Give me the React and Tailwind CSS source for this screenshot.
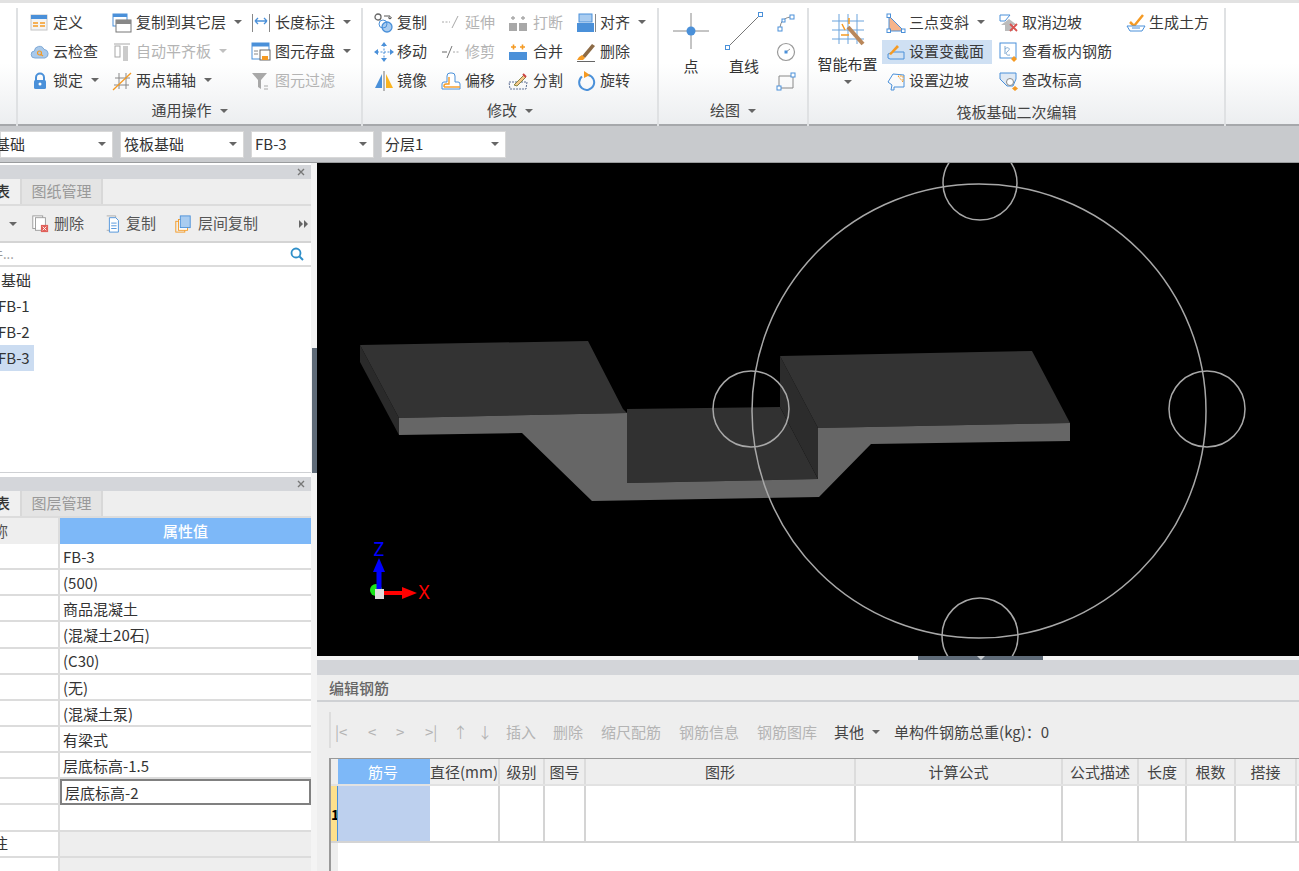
// Ribbon + component panels + 3D canvas of a rebar modelling desktop app

const BLUE = "#4a90d9";
const LIGHT = "#a9ccf0";
const ORANGE = "#f59a23";
const GRAY = "#a8a8a8";

const ICONS = {
  define: <><rect x="1" y="2" width="16" height="15" fill="#f4f4f4" stroke="#c4c4c4" /><rect x="1" y="2" width="16" height="4" fill={BLUE} /><path d="M3 10h5M3 13h5M10 10h5M10 13h5" stroke={ORANGE} strokeWidth="1.400" /></>,
  cloud: <><path d="M5 16a3.500 3.500 0 0 1-.6-7A5 5 0 0 1 14 7.400 4.400 4.400 0 0 1 15 16z" fill="#a9c9ea" stroke="#7fa9d6" /><circle cx="9.500" cy="11" r="2" fill="none" stroke={ORANGE} strokeWidth="1.200" /><path d="M11 12.500l2 1.500" stroke={ORANGE} strokeWidth="1.200" /></>,
  lock: <><path d="M6 10V6.500a4 4 0 0 1 8 0V10" fill="none" stroke={BLUE} strokeWidth="2" /><rect x="4" y="9" width="12" height="9" rx="1.500" fill={BLUE} /><circle cx="10" cy="13" r="1.500" fill="#fff" /></>,
  copyLayer: <><rect x="1" y="1" width="14" height="12" fill="#fff" stroke={BLUE} /><rect x="1" y="1" width="14" height="3" fill={BLUE} /><rect x="4" y="7" width="15" height="12" fill="#fff" stroke="#777" /><rect x="4" y="7" width="15" height="4" fill="#888" /></>,
  autoAlign: <><path d="M2 2h16" stroke={GRAY} /><rect x="3" y="4" width="5" height="11" fill="none" stroke={GRAY} /><rect x="11" y="4" width="5" height="15" fill={GRAY} opacity=".6" /></>,
  twoPoint: <><path d="M3 7h15M2 14h15M7 2v16M14 2v16" stroke="#888" /><path d="M1 19L19 2" stroke={ORANGE} strokeWidth="1.300" /></>,
  dim: <><path d="M1.500 1v18M18.500 1v18" stroke="#888" /><path d="M4 8h12M4 8l3-3M4 8l3 3M16 8l-3-3M16 8l-3 3" fill="none" stroke={BLUE} strokeWidth="1.300" /></>,
  saveEl: <><rect x="1" y="1" width="17" height="16" fill="#fff" stroke={BLUE} /><rect x="1" y="1" width="17" height="3.500" fill={BLUE} /><path d="M3 9h4M3 12h4" stroke="#888" /><rect x="9" y="8" width="10" height="10" fill="#fff" stroke="#666" /><rect x="11" y="14" width="6" height="4" fill={ORANGE} /></>,
  filter: <><path d="M1 2h15l-6 7v9l-3-2V9z" fill={GRAY} /><path d="M13 15h4M13 18h4" stroke={GRAY} /></>,
  copy: <><circle cx="4" cy="4" r="3" fill="none" stroke="#666" strokeWidth="1.300" /><circle cx="13" cy="14" r="5" fill={LIGHT} stroke={BLUE} strokeWidth="1.300" /><circle cx="9" cy="11" r="4" fill="none" stroke={BLUE} /><path d="M10 3h6v3M16 6l-2-1.500M16 6l1.800-1.500" fill="none" stroke="#555" /></>,
  move: <><path d="M10 3v14M3 10h14" stroke={BLUE} strokeWidth="1" strokeDasharray="2 1.500" /><path d="M10 0l3 4H7zM10 20l3-4H7zM0 10l4-3v6zM20 10l-4-3v6z" fill={BLUE} /></>,
  mirror: <><path d="M8 3v14H1z" fill={BLUE} /><path d="M12 3v14h7z" fill="#fbb41f" /><path d="M10 0v20" stroke="#777" /></>,
  extend: <><path d="M1 9h8" stroke={GRAY} strokeDasharray="2 1.500" /><path d="M11 15l6-12" stroke={GRAY} /></>,
  trim: <><path d="M1 10h5" stroke="#666" /><path d="M12 10h7" stroke={GRAY} strokeDasharray="2 1.500" /><path d="M6 16l5-12" stroke="#777" /></>,
  offset: <><path d="M1 18v-5a2 2 0 0 1 2-2h3V5a3 3 0 0 1 3-3h2a3 3 0 0 1 3 3v6h3a2 2 0 0 1 2 2v5z" fill="#fff" stroke={BLUE} /><path d="M3 16v-1a2 2 0 0 1 2-2h3V6" fill="none" stroke={ORANGE} strokeWidth="1.400" /><path d="M3 16h16" stroke={ORANGE} strokeWidth="1.400" /></>,
  breakEl: <><rect x="1" y="10" width="8" height="8" fill={GRAY} /><rect x="11" y="10" width="8" height="8" fill={GRAY} /><path d="M3 5h4M5 3v4M13 5h4M15 3v4" stroke={GRAY} strokeWidth="1.300" /></>,
  merge: <><rect x="1" y="10" width="18" height="8" fill={BLUE} /><path d="M3 5h5M5.500 2.500v5M12 5h5M14.500 2.500v5" stroke={ORANGE} strokeWidth="1.600" /></>,
  split: <><path d="M1 11h18l-1 7H2z" fill="none" stroke="#5d6f94" strokeDasharray="2 1" /><path d="M6 14L16 4l2 2L9 15z" fill="#f6c78b" stroke="#884" /><path d="M15 3l3 3" stroke="#c44" strokeWidth="2" /></>,
  align: <><rect x="3" y="1" width="13" height="8" fill={LIGHT} stroke={BLUE} /><rect x="1" y="10" width="17" height="9" fill={BLUE} /><path d="M19.500 1v18" stroke="#888" /></>,
  erase: <><path d="M6 14L16 2l3 2L9 16z" fill="#8c6a45" /><path d="M3 15l3-2 3 3-2 2H1z" fill={ORANGE} /><path d="M1 19.500h18" stroke="#666" /></>,
  rotate: <><path d="M6 5.500a7.500 7.500 0 1 0 6-1.500" fill="none" stroke={BLUE} strokeWidth="2" /><path d="M8 0l6 4-6 3z" fill={ORANGE} /></>,
  arc: <><path d="M4 16C4 8 9 4 16 4" fill="none" stroke="#888" /><rect x="2" y="14" width="4" height="4" fill="#fff" stroke={BLUE} /><rect x="14" y="2" width="4" height="4" fill="#fff" stroke={BLUE} /><rect x="6" y="6" width="3" height="3" fill="#fff" stroke={BLUE} /></>,
  circle: <><circle cx="10" cy="10" r="8.500" fill="none" stroke="#999" strokeWidth="1.200" /><path d="M10 10l4-3" stroke="#999" /><rect x="8.500" y="8.500" width="3" height="3" fill={BLUE} /></>,
  rect: <><path d="M3 5h14v12H3z" fill="none" stroke="#888" /><rect x="1" y="15" width="4" height="4" fill="#fff" stroke={BLUE} /><rect x="15" y="2" width="4" height="4" fill="#fff" stroke={BLUE} /></>,
  threePt: <><path d="M3 3v15h15z" fill="#f6b48a" stroke={BLUE} /><rect x="1" y="1" width="3.500" height="3.500" fill="#fff" stroke={BLUE} /><rect x="1" y="16" width="3.500" height="3.500" fill="#fff" stroke={BLUE} /><rect x="15.500" y="16" width="3.500" height="3.500" fill="#fff" stroke={BLUE} /></>,
  section: <><path d="M2 12l5-2h11v7H4l-2-1z" fill="none" stroke={BLUE} /><path d="M3 12l8-9 2 2-8 8z" fill={ORANGE} /></>,
  slope: <><path d="M2 11l5-8 11 1v12H8v3H5l1-5z" fill="none" stroke={BLUE} /><path d="M12 5l5 6V5z" fill="none" stroke={ORANGE} strokeDasharray="2 1" /></>,
  cancel: <><path d="M1 2v6h5l5-6z" fill="none" stroke={BLUE} /><path d="M2 12l8-6 8 6h-4v6H6v-6z" fill="#bbb" /><path d="M11 11l7 7M18 11l-7 7" stroke="#d9534f" strokeWidth="1.800" /></>,
  viewBar: <><rect x="1" y="1" width="16" height="15" fill="#fff" stroke={BLUE} /><path d="M6 4v8M6 7c3-3 6 0 3 2s-2 5 2 4" fill="none" stroke="#7da7d0" /><path d="M15 14l3 3-3 3-3-3z" fill={ORANGE} /></>,
  elev: <><path d="M1 2h16v6l-3 7H8L1 8z" fill="#dfe9f4" stroke={BLUE} /><circle cx="11" cy="11" r="3.500" fill="#fff" stroke="#888" /><path d="M16 15l3 2.500-3 2.500-3-2.500z" fill={ORANGE} /></>,
  earth: <><path d="M4 9l4 4 9-11" fill="none" stroke={ORANGE} strokeWidth="2.500" /><path d="M1 13h18l-3 5H4z" fill="#fff" stroke={BLUE} /><path d="M6 15h8" stroke={BLUE} /></>,
  del: <><rect x="2" y="1" width="11" height="14" fill="#fff" stroke="#999" /><rect x="5" y="3" width="11" height="14" fill="#fff" stroke="#999" /><rect x="11" y="11" width="8" height="8" fill="#e0605a" /><path d="M13 13l4 4M17 13l-4 4" stroke="#fff" /></>,
  doc: <><path d="M3 1h10v16H3" fill="none" stroke="#aaa" /><path d="M6 3h7l3 3v13H6z" fill="#fff" stroke={BLUE} /><path d="M8 9h6M8 12h6M8 15h6" stroke={BLUE} /></>,
  layerCopy: <><rect x="2" y="7" width="10" height="12" fill="none" stroke={ORANGE} /><rect x="5" y="5" width="10" height="12" fill="#fff" stroke={ORANGE} /><rect x="7" y="1" width="11" height="13" fill={LIGHT} stroke={BLUE} /></>,
};

function Icon({ name, size = 20 }) {
  return (
    <svg width={size} height={size} viewBox="0 0 20 20" className="shrink-0 block">
      {ICONS[name]}
    </svg>
  );
}

function Caret({ color = "border-t-[#666]" }) {
  return <span className={`inline-block w-0 h-0 border-x-[4px] border-t-[4px] border-x-transparent ${color}`} />;
}

function Item({ icon, label, off, caret, active, w = "w-[23px]" }) {
  return (
    <div className="h-[29px] flex items-center">
      <div className={`h-6 flex items-center whitespace-nowrap ${active ? "bg-[#cfe0f3] -ml-1 pl-1 w-[110px]" : ""}`}>
        <span className={`${w} shrink-0`}>
          <Icon name={icon} />
        </span>
        <span className={off ? "text-[#b4b4b4]" : "text-[#3a3a3a]"}>{label}</span>
        {caret && (
          <span className="ml-[8px] mb-[2px] flex">
            <Caret color={off ? "border-t-[#c0c0c0]" : "border-t-[#666]"} />
          </span>
        )}
      </div>
    </div>
  );
}

function Column({ width, items }) {
  return (
    <div className={`${width} shrink-0`}>
      {items.map((it) => (
        <Item key={it.label} {...it} />
      ))}
    </div>
  );
}

function Group({ width, title, caret = true, children, pad = "", titlePad = "" }) {
  return (
    <div className={`${width} shrink-0 flex flex-col border-r-2 border-[#dfe1e3] h-[118px]`}>
      <div className={`flex h-[87px] shrink-0 ${pad}`}>{children}</div>
      <div className={`h-[31px] flex items-center justify-center gap-[8px] text-[#444] ${titlePad}`}>
        <span>{title}</span>
        {caret && <Caret />}
      </div>
    </div>
  );
}

function Ribbon() {
  return (
    <div className="h-[126px] shrink-0 pt-[5px] border-t-[3px] border-b-[2px] border-t-[#e2e2e2] border-b-[#a6a8ab] bg-gradient-to-b from-white from-50% to-[#eceef0] flex text-[15px]">
      <div className="w-[18px] shrink-0 border-r-2 border-[#dfe1e3] h-[118px]" />
      <Group width="w-[345px]" title="通用操作" pad="pl-[12px]">
        <Column
          width="w-[82px]"
          items={[
            { icon: "define", label: "定义" },
            { icon: "cloud", label: "云检查" },
            { icon: "lock", label: "锁定", caret: true },
          ]}
        />
        <Column
          width="w-[139px]"
          items={[
            { icon: "copyLayer", label: "复制到其它层", caret: true, w: "w-[24px]" },
            { icon: "autoAlign", label: "自动平齐板", off: true, caret: true, w: "w-[24px]" },
            { icon: "twoPoint", label: "两点辅轴", caret: true, w: "w-[24px]" },
          ]}
        />
        <Column
          width="w-[105px]"
          items={[
            { icon: "dim", label: "长度标注", caret: true, w: "w-[24px]" },
            { icon: "saveEl", label: "图元存盘", caret: true, w: "w-[24px]" },
            { icon: "filter", label: "图元过滤", off: true, w: "w-[24px]" },
          ]}
        />
      </Group>
      <Group width="w-[296px]" title="修改" pad="pl-[11px]">
        <Column
          width="w-[67px]"
          items={[
            { icon: "copy", label: "复制" },
            { icon: "move", label: "移动" },
            { icon: "mirror", label: "镜像" },
          ]}
        />
        <Column
          width="w-[67px]"
          items={[
            { icon: "extend", label: "延伸", off: true, w: "w-[24px]" },
            { icon: "trim", label: "修剪", off: true, w: "w-[24px]" },
            { icon: "offset", label: "偏移", w: "w-[24px]" },
          ]}
        />
        <Column
          width="w-[68px]"
          items={[
            { icon: "breakEl", label: "打断", off: true, w: "w-[25px]" },
            { icon: "merge", label: "合并", w: "w-[25px]" },
            { icon: "split", label: "分割", w: "w-[25px]" },
          ]}
        />
        <Column
          width="w-[80px]"
          items={[
            { icon: "align", label: "对齐", caret: true, w: "w-[24px]" },
            { icon: "erase", label: "删除", w: "w-[24px]" },
            { icon: "rotate", label: "旋转", w: "w-[24px]" },
          ]}
        />
      </Group>
      <Group width="w-[150px]" title="绘图" pad="pl-[11px]">
        <div className="w-[42px] flex flex-col items-center pt-[4px]">
          <svg width="38" height="38" viewBox="0 0 38 38">
            <path d="M19 1v36M1 19h36" stroke="#8a8a8a" />
            <circle cx="19" cy="19" r="4.500" fill={BLUE} />
          </svg>
          <span className="mt-[5px] text-[#333]">点</span>
        </div>
        <div className="w-[64px] flex flex-col items-center pt-[4px]">
          <svg width="38" height="38" viewBox="0 0 38 38">
            <path d="M2 36L36 2" stroke="#777" />
            <rect x="0.500" y="33.500" width="4" height="4" fill="#fff" stroke={BLUE} />
            <rect x="33.500" y="0.500" width="4" height="4" fill="#fff" stroke={BLUE} />
          </svg>
          <span className="mt-[5px] text-[#333]">直线</span>
        </div>
        <div className="flex flex-col">
          {["arc", "circle", "rect"].map((n) => (
            <div key={n} className="h-[29px] flex items-center">
              <Icon name={n} size={20} />
            </div>
          ))}
        </div>
      </Group>
      <Group width="w-[417px]" title="筏板基础二次编辑" caret={false} titlePad="pt-[4px]">
        <div className="w-[77px] shrink-0 flex flex-col items-center pt-[4px]">
          <svg width="38" height="38" viewBox="0 0 38 38">
            <path d="M3 9h32M3 18h32M3 27h32M10 2v30M19 2v30M28 2v30" stroke="#6aa3dc" />
            <path d="M19 15l15 17" stroke="#b9875a" strokeWidth="4" />
            <path d="M13 12l3 6M20 6v6M12 23h8" stroke={ORANGE} strokeWidth="1.500" />
          </svg>
          <span className="mt-[3px] text-[#333] whitespace-nowrap leading-[22px]">智能布置</span>
          <span className="mt-[5px] flex">
            <Caret />
          </span>
        </div>
        <Column
          width="w-[113px]"
          items={[
            { icon: "threePt", label: "三点变斜", caret: true },
            { icon: "section", label: "设置变截面", active: true },
            { icon: "slope", label: "设置边坡" },
          ]}
        />
        <Column
          width="w-[127px]"
          items={[
            { icon: "cancel", label: "取消边坡" },
            { icon: "viewBar", label: "查看板内钢筋" },
            { icon: "elev", label: "查改标高" },
          ]}
        />
        <Column width="w-[90px]" items={[{ icon: "earth", label: "生成土方" }]} />
      </Group>
    </div>
  );
}

function Select({ width, text, clip }) {
  return (
    <div className={`${width} h-[27px] bg-white border border-[#d8d8d8] flex items-center justify-between pr-[6px] text-[15px] text-[#333] shrink-0`}>
      <span className={`pt-[1px] ${clip ? "-ml-[6px]" : "pl-[3px]"}`}>{text}</span>
      <Caret />
    </div>
  );
}

function FilterBar() {
  return (
    <div className="h-[37px] shrink-0 bg-[#c8cacd] flex items-center gap-[7px] border-b border-[#9a9c9e]">
      <Select width="w-[113px]" text="基础" clip />
      <Select width="w-[124px]" text="筏板基础" />
      <Select width="w-[123px]" text="FB-3" />
      <Select width="w-[125px]" text="分层1" />
    </div>
  );
}

function PanelHead({ tab }) {
  return (
    <>
      <div className="h-[14px] shrink-0 bg-[#d4d6da] flex items-center justify-end pr-[6px]">
        <svg width="8" height="8" viewBox="0 0 8 8">
          <path d="M1 1l6 6M7 1l-6 6" stroke="#777" strokeWidth="1.400" />
        </svg>
      </div>
      <div className="h-[27px] shrink-0 flex bg-[#eeeeee] border-b-2 border-[#dcdcdc] text-[15px]">
        <div className="w-[22px] bg-[#f0f0f0] border-r-2 border-[#d8d8d8] font-medium text-[#333] flex items-center justify-end overflow-hidden pr-[10px]">
          <span className="shrink-0">表</span>
        </div>
        <div className="w-[81px] bg-[#e4e4e4] border-r-2 border-[#d8d8d8] text-[#999] flex items-center justify-center">{tab}</div>
      </div>
    </>
  );
}

function ListPanel() {
  return (
    <div className="h-[308px] shrink-0 mt-[2px] flex flex-col border-b border-[#cfd1d4]">
      <PanelHead tab="图纸管理" />
      <div className="h-[37px] shrink-0 bg-[#eeeeee] border-b-2 border-[#d4d4d4] flex items-center text-[15px] text-[#555]">
        <span className="ml-[9px] flex">
          <Caret />
        </span>
        <span className="ml-[14px]"><Icon name="del" size={18} /></span>
        <span className="ml-[5px]">删除</span>
        <span className="ml-[20px]"><Icon name="doc" size={18} /></span>
        <span className="ml-[4px]">复制</span>
        <span className="ml-[18px]"><Icon name="layerCopy" size={18} /></span>
        <span className="ml-[6px]">层间复制</span>
        <svg width="10" height="8" viewBox="0 0 10 8" className="ml-[41px]">
          <path d="M0 0l4 4-4 4zM5 0l4 4-4 4z" fill="#666" />
        </svg>
      </div>
      <div className="h-[24px] shrink-0 bg-white border-b-2 border-[#dcdcdc] flex items-center justify-between pr-[7px]">
        <span className="text-[13px] text-[#999] -ml-[10px]">件...</span>
        <svg width="14" height="14" viewBox="0 0 14 14">
          <circle cx="6" cy="6" r="4.500" fill="none" stroke="#2f8fc9" strokeWidth="1.800" />
          <path d="M9.500 9.500L13 13" stroke="#2f8fc9" strokeWidth="2" />
        </svg>
      </div>
      <div className="flex-1 bg-white text-[15px] text-[#333]">
        <div className="h-[26px] flex items-center pl-[1px]">基础</div>
        <div className="h-[26px] flex items-center -ml-[2px]">FB-1</div>
        <div className="h-[26px] flex items-center -ml-[2px]">FB-2</div>
        <div className="h-[26px] w-[34px] flex items-center bg-[#cbdcf1]">
          <span className="-ml-[2px]">FB-3</span>
        </div>
      </div>
    </div>
  );
}

const PROPS = ["FB-3", "(500)", "商品混凝土", "(混凝土20石)", "(C30)", "(无)", "(混凝土泵)", "有梁式", "层底标高-1.5", "层底标高-2", "", "", ""];

function PropsPanel() {
  return (
    <div className="mt-[4px] flex-1 flex flex-col overflow-hidden">
      <PanelHead tab="图层管理" />
      <div className="h-[26px] shrink-0 flex text-[15px]">
        <div className="w-[60px] bg-[#eeeeee] border-r-2 border-[#dcdcdc] text-[#555] flex items-center overflow-hidden">
          <span className="-ml-[7px]">称</span>
        </div>
        <div className="flex-1 bg-[#7db8f8] text-white font-medium flex items-center justify-center pt-[1px]">属性值</div>
      </div>
      {PROPS.map((v, i) => (
        <div key={i} className="h-[26.150px] shrink-0 flex text-[15px] text-[#333] bg-white">
          <div className="w-[60px] border-r-2 border-b-2 border-[#dcdcdc] flex items-center overflow-hidden">
            {i === 11 && <span className="-ml-[7px]">注</span>}
          </div>
          <div className={`flex-1 flex items-center pl-[3px] pt-[2px] ${i === 9 ? "border-2 border-[#808080]" : "border-b-2 border-[#dcdcdc]"} ${i > 10 ? "bg-[#eeeeee]" : ""}`}>
            {v}
          </div>
        </div>
      ))}
    </div>
  );
}

function Canvas() {
  return (
    <div className="h-[493px] shrink-0 bg-black">
      <svg width="982" height="493" viewBox="317 163 982 493" className="block">
        <polygon points="360,345 399,418 399,435 360,362" fill="#2a2a2a" />
        <polygon points="360,345 588,341 623,409 627,413 399,418" fill="#333333" />
        <polygon points="627,409 780,407 818,479 627,483" fill="#313131" />
        <polygon points="780,356 818,428 818,479 780,407" fill="#2c2c2c" />
        <polygon points="780,356 1032,351 1070,423 818,428" fill="#333333" />
        <polygon points="399,418 627,413 627,483 818,479 818,428 1070,423 1070,441 871,444 819,497 592,501 522,433 399,435" fill="#666666" />
        <g fill="none" stroke="#a8a8a8" strokeWidth="1.500">
          <circle cx="979" cy="411" r="227" />
          <circle cx="980" cy="183" r="37" />
          <circle cx="751" cy="409" r="38" />
          <circle cx="1207" cy="409" r="38" />
          <circle cx="980" cy="636" r="38" />
        </g>
        <circle cx="376" cy="590" r="6" fill="#19e619" />
        <path d="M379 572v18" stroke="#0000ff" strokeWidth="5" />
        <polygon points="379,558 373,572 385,572" fill="#0000ff" />
        <path d="M384 593h18" stroke="#ff0000" strokeWidth="4" />
        <polygon points="417,593 402,587 402,599" fill="#ff0000" />
        <rect x="375" y="589" width="9" height="10" fill="#dddddd" />
        <text x="379" y="556" textAnchor="middle" fontSize="19" fill="#0000ff" fontFamily="Noto Sans">Z</text>
        <text x="424" y="599" textAnchor="middle" fontSize="19" fill="#ff0000" fontFamily="Noto Sans">X</text>
      </svg>
    </div>
  );
}

const COLS = [
  ["筋号", "w-[92px]"],
  ["直径(mm)", "w-[70px]"],
  ["级别", "w-[45px]"],
  ["图号", "w-[41px]"],
  ["图形", "w-[270px]"],
  ["计算公式", "w-[207px]"],
  ["公式描述", "w-[76px]"],
  ["长度", "w-[48px]"],
  ["根数", "w-[49px]"],
  ["搭接", "w-[61px]"],
  ["", "w-[5px]"],
];

function RebarPanel() {
  return (
    <div className="flex-1 flex flex-col bg-[#eeeeee] overflow-hidden">
      <div className="h-[4px] shrink-0 bg-[#f4f4f4]">
        <div className="ml-[601px] w-[125px] h-full bg-[#5f6b78] flex justify-center">
          <span className="w-0 h-0 border-x-[4px] border-t-[4px] border-x-transparent border-t-[#c8ccd0]" />
        </div>
      </div>
      <div className="h-[15px] shrink-0 bg-[#d3d5d9]" />
      <div className="h-[27px] shrink-0 border-b-2 border-[#cfd1d4] flex items-center pl-[12px] pt-[2px] text-[15px] text-[#666] font-medium">编辑钢筋</div>
      <div className="h-[56px] shrink-0 pl-[12px] flex items-center text-[15px] text-[#b4b4b4]">
        <div className="h-[36px] w-[2px] bg-[#dddddd] mr-[4px]" />
        <div className="flex items-center pt-[4px]">
          <span className="w-[33px]">|&lt;</span>
          <span className="w-[28px]">&lt;</span>
          <span className="w-[29px]">&gt;</span>
          <span className="w-[23px]">&gt;|</span>
          <span className="w-[25px] text-center">↑</span>
          <span className="w-[24px] text-center mr-[9px]">↓</span>
          <span className="mr-[17px]">插入</span>
          <span className="mr-[18px]">删除</span>
          <span className="mr-[18px]">缩尺配筋</span>
          <span className="mr-[18px]">钢筋信息</span>
          <span className="mr-[17px]">钢筋图库</span>
          <span className="text-[#444]">其他</span>
          <span className="ml-[8px] mr-[14px] flex"><Caret /></span>
          <span className="text-[#444]">单构件钢筋总重(kg)：0</span>
        </div>
      </div>
      <div className="ml-[12px] flex-1 border-t border-l-2 border-[#999] bg-white">
        <div className="flex h-[27px] text-[15px] text-[#444] border-b-2 border-[#e2e2e2]">
          <div className="w-[7px] shrink-0 bg-[#eeeeee]" />
          {COLS.map(([t, w], i) => (
            <div
              key={i}
              className={`${w} shrink-0 flex items-center justify-center whitespace-nowrap pt-[2px] border-r-2 ${i === 0 ? "bg-[#7db8f8] text-white border-[#7db8f8]" : "bg-[#eeeeee] border-[#dcdcdc]"}`}
            >
              {t}
            </div>
          ))}
          <div className="flex-1 bg-[#eeeeee]" />
        </div>
        <div className="flex h-[57px] border-b-2 border-[#d4d4d4]">
          <div className="w-[7px] shrink-0 bg-[#fde08c] border-r border-[#4a90d9] flex items-center text-[14px] font-bold leading-none overflow-hidden">1</div>
          {COLS.map(([t, w], i) => (
            <div key={i} className={`${w} shrink-0 border-r-2 ${i === 0 ? "bg-[#bdd0ee] border-[#bdd0ee]" : "border-[#d4d4d4]"}`} />
          ))}
        </div>
        <div className="flex h-full">
          <div className="w-[7px] shrink-0 bg-[#eeeeee]" />
        </div>
      </div>
    </div>
  );
}

export default function App() {
  return (
    <div className="w-[1299px] h-[871px] overflow-hidden flex flex-col bg-white font-['Noto_Sans_CJK_SC','Noto_Sans',sans-serif]">
      <Ribbon />
      <FilterBar />
      <div className="flex-1 flex min-h-0">
        <div className="w-[311px] shrink-0 flex flex-col min-h-0">
          <ListPanel />
          <PropsPanel />
        </div>
        <div className="w-[6px] shrink-0 bg-[#f4f4f4] pt-[185px] pl-[1px]">
          <div className="h-[125px] bg-[#5f6b78]" />
        </div>
        <div className="flex-1 flex flex-col min-w-0">
          <Canvas />
          <RebarPanel />
        </div>
      </div>
    </div>
  );
}
